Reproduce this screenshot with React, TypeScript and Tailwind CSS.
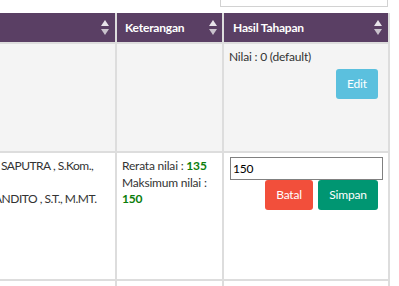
import React from "react";

function SortIcon() {
  return (
    <svg width="8" height="15" viewBox="0 0 8 15" className="shrink-0">
      <polygon points="4,0 8,6 0,6" fill="#e8e4ea" />
      <polygon points="0,9 8,9 4,15" fill="#c9c2cc" />
    </svg>
  );
}

export default function App() {
  return (
    <div
      className="w-[399px] h-[286px] overflow-hidden bg-white text-[12px] tracking-[-0.2px] text-[#333]"
      style={{ fontFamily: "Lato, 'Liberation Sans', sans-serif" }}
    >
      <div className="h-[13px] relative">
        <div className="absolute left-[220px] top-[-20px] w-[168px] h-[27px] border border-[#d2d2d2] bg-white" />
      </div>
      <div className="w-[390px] pr-[2px] bg-[#dddddd] grid grid-cols-[115px_105px_164px] grid-rows-[29px_107px_126px_20px] gap-[2px]">
        {/* header */}
        <div className="bg-[#5a3f64] flex items-center justify-end pr-[6px]">
          <SortIcon />
        </div>
        <div className="bg-[#5a3f64] flex items-center justify-between pl-[8px] pr-[5px]">
          <span className="text-white font-bold">Keterangan</span>
          <SortIcon />
        </div>
        <div className="bg-[#5a3f64] flex items-center justify-between pl-[9px] pr-[6px]">
          <span className="text-white font-bold">Hasil Tahapan</span>
          <SortIcon />
        </div>

        {/* row 1 */}
        <div className="bg-[#f4f4f4]" />
        <div className="bg-[#f4f4f4]" />
        <div className="bg-[#f4f4f4] px-[5px] pt-[5px] leading-[16px] flex flex-col">
          <div>Nilai : 0 (default)</div>
          <div className="flex justify-end pr-[5px] mt-[4px]">
            <button className="w-[42px] h-[30px] rounded-[3px] bg-[#5bc0de] text-white">
              Edit
            </button>
          </div>
        </div>

        {/* row 2 */}
        <div className="bg-white pt-[5px] leading-[16.5px] whitespace-nowrap overflow-hidden tracking-[-0.5px]">
          <div className="ml-[1px]">SAPUTRA , S.Kom.,</div>
          <div>&nbsp;</div>
          <div className="ml-[-6px]">ANDITO , S.T., M.MT.</div>
        </div>
        <div className="bg-white px-[5px] pt-[5px] leading-[16.5px]">
          <div className="whitespace-nowrap">
            Rerata nilai : <span className="font-bold text-[#0b7d0b]">135</span>
          </div>
          <div className="whitespace-nowrap">Maksimum nilai :</div>
          <div className="font-bold text-[#0b7d0b]">150</div>
        </div>
        <div className="bg-white pl-[6px] pr-[5px] pt-[4px] flex flex-col">
          <input
            defaultValue="150"
            className="w-[153px] h-[23px] border border-[#808080] px-[2px] text-[12px] text-black outline-none"
            style={{ fontFamily: "Lato, 'Liberation Sans', sans-serif" }}
          />
          <div className="flex justify-end gap-[5px] pr-[5px]">
            <button className="w-[48px] h-[30px] rounded-[3px] bg-[#f24f3b] text-white">
              Batal
            </button>
            <button className="w-[60px] h-[30px] rounded-[3px] bg-[#009672] text-white">
              Simpan
            </button>
          </div>
        </div>

        {/* row 3 */}
        <div className="bg-white" />
        <div className="bg-white" />
        <div className="bg-white" />
      </div>
    </div>
  );
}
